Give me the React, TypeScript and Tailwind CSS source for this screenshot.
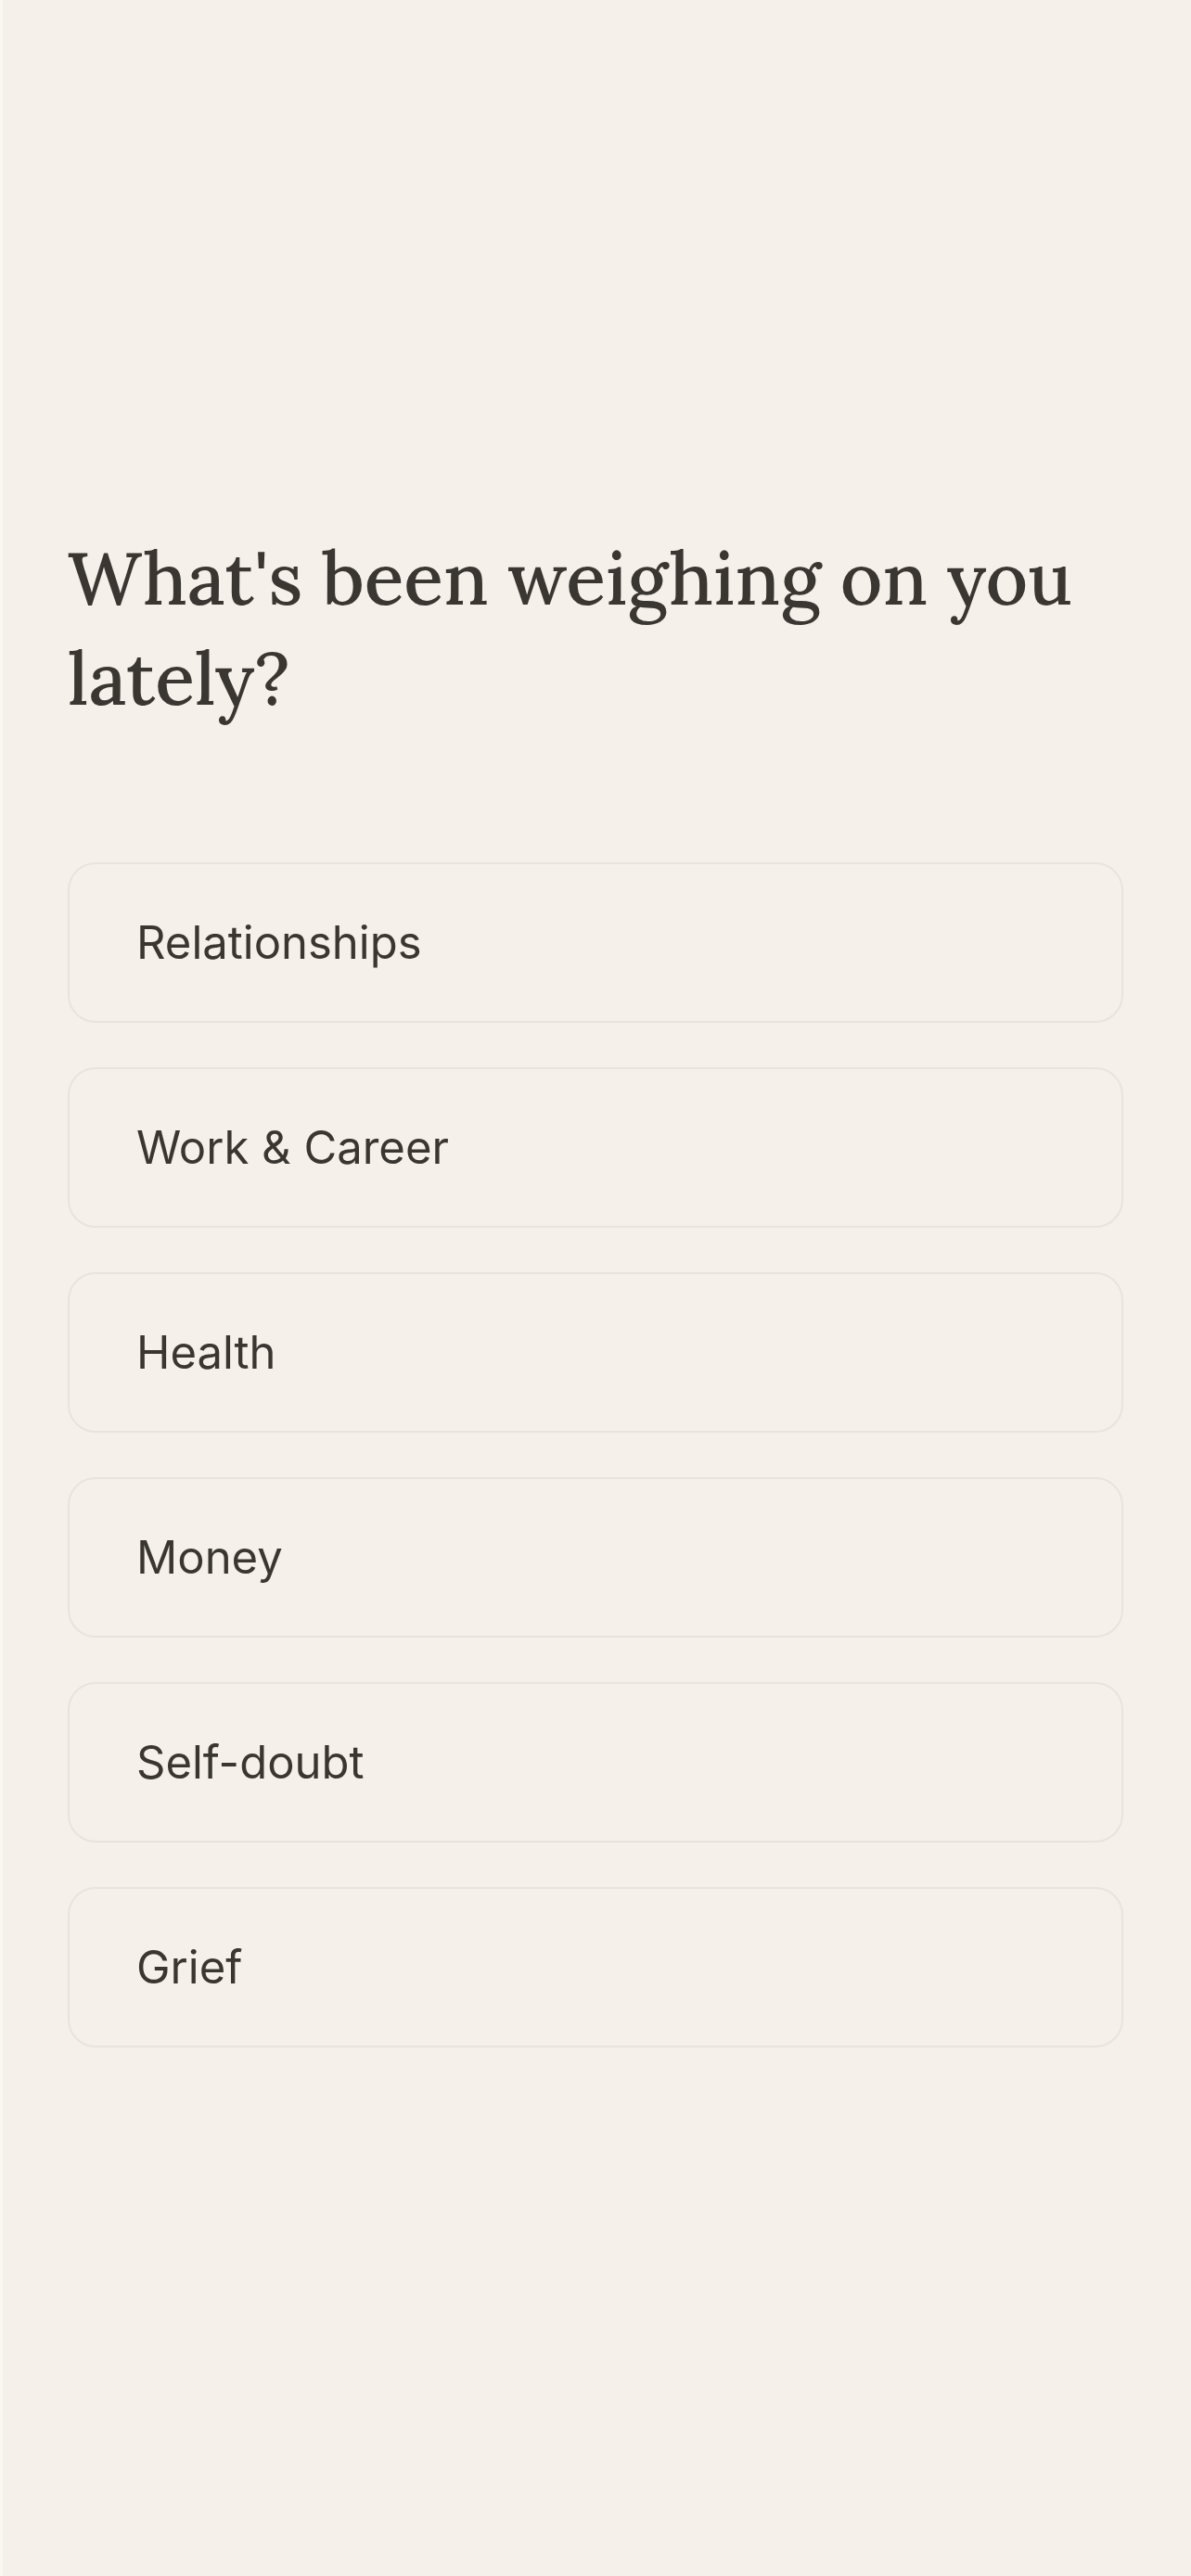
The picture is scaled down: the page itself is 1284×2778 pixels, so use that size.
const topics = ["Relationships", "Work & Career", "Health", "Money", "Self-doubt", "Grief"];

export default function App() {
  return (
    <div className="min-h-[2778px] border-l-[3px] border-[#f9f7f2] bg-[#f5f1ea] pl-[70px] pr-[73px] pt-[570px] text-[#3a3632]">
      <h1 className="font-['Lora','Liberation_Serif',serif] text-[79px] font-medium leading-[108px]">
        What's been weighing on you lately?
      </h1>

      <div className="mt-[144px] flex flex-col gap-[48px]">
        {topics.map((t) => (
          <button
            key={t}
            type="button"
            className="flex h-[173px] w-full items-center rounded-[30px] border-2 border-[#e8e4dd] bg-[#f5f1ea] px-[72px] text-left font-['Inter',sans-serif] text-[49px] leading-[72px] text-[#3a3632]"
          >
            {t}
          </button>
        ))}
      </div>
    </div>
  );
}
